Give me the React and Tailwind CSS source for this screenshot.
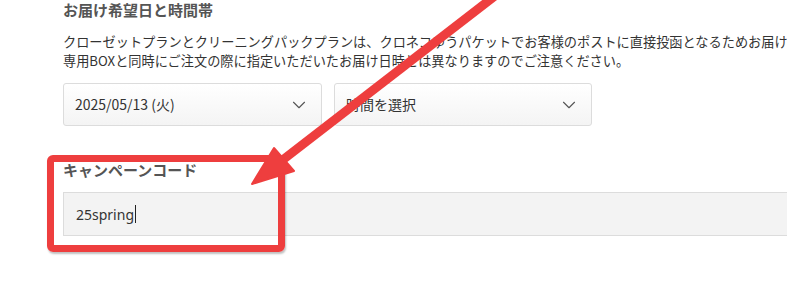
import { ChevronDown } from "lucide-react";

const jp = { fontFamily: '"Noto Sans CJK JP", "Noto Sans", sans-serif' };

const Select = ({ label, width }) => (
  <div
    className={`flex h-[43px] items-center justify-between rounded-[3px] border border-[#dcdcdc] bg-gradient-to-b from-white to-[#f4f4f4] pl-[11px] pr-[10px] ${width}`}
  >
    <span className="text-[14px] text-[#333]">{label}</span>
    <ChevronDown className="h-[22px] w-[24px] text-[#555]" strokeWidth={1.2} />
  </div>
);

const App = () => {
  return (
    <div className="relative h-[285px] w-[787px] overflow-hidden bg-white" style={jp}>
      <div className="pl-[63px]">
        <h2 className="text-[15px] font-bold leading-[20px] text-[#555]">お届け希望日と時間帯</h2>
        <p className="mt-[12px] whitespace-nowrap text-[13.2px] leading-[19px] text-[#333]">
          クローゼットプランとクリーニングパックプランは、クロネコゆうパケットでお客様のポストに直接投函となるためお届け日時
          <br />
          専用BOXと同時にご注文の際に指定いただいたお届け日時とは異なりますのでご注意ください。
        </p>
        <div className="mt-[13px] flex gap-[12px]">
          <Select label="2025/05/13 (火)" width="w-[259px]" />
          <Select label="時間を選択" width="w-[258px]" />
        </div>

        <h2 className="mt-[34px] text-[15px] font-bold leading-[20px] text-[#555]">キャンペーンコード</h2>
        <div className="mt-[12px] flex h-[44px] w-[760px] items-center border border-[#dcdcdc] bg-[#f3f3f3] pl-[12px]">
          <span className="text-[14px] text-[#333]" style={{ fontFamily: '"Noto Sans", sans-serif' }}>25spring</span>
          <span className="ml-[1px] h-[18px] w-[1px] bg-[#222]" />
        </div>
      </div>

      {/* annotation: red box + arrow */}
      <div className="absolute left-[47px] top-[155px] h-[97px] w-[238px] rounded-[6px] border-[7px] border-[#ee3e3e] shadow-[1px_2px_2px_rgba(0,0,0,0.25)]" />
      <svg className="absolute left-0 top-0" width="787" height="285" viewBox="0 0 787 285">
        <g fill="#ee3e3e" stroke="#ee3e3e" strokeLinejoin="round">
          <line x1="500" y1="-8" x2="280" y2="162" strokeWidth="9" />
          <polygon points="252,184 274,148 294,171" strokeWidth="2" />
        </g>
      </svg>
    </div>
  );
};

export default App;
